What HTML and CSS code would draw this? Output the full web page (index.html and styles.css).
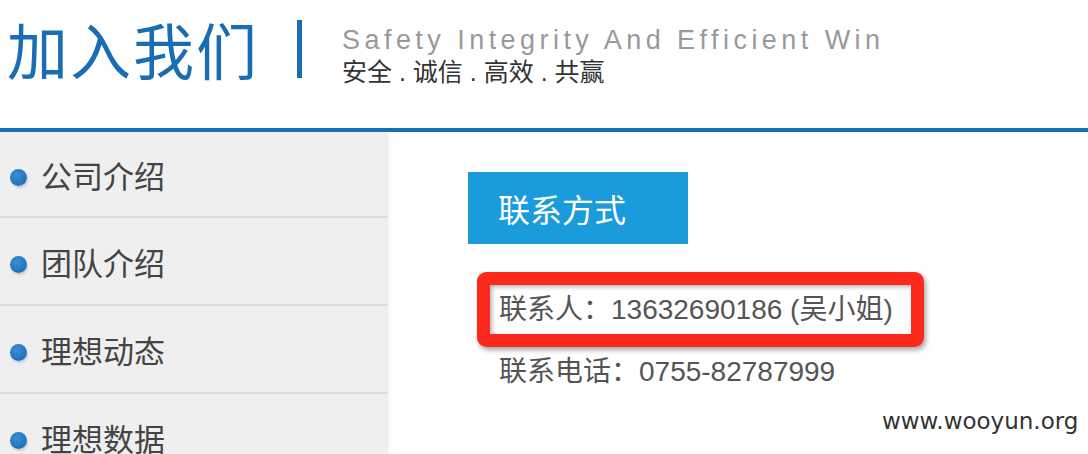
FILE: index.html
```html
<!DOCTYPE html>
<html lang="zh-CN">
<head>
<meta charset="utf-8">
<title>加入我们</title>
<link rel="stylesheet" href="styles.css">
</head>
<body>
<header class="header">
  <h1 class="title">加入我们</h1>
  <span class="divider"></span>
  <div class="slogan">
    <div class="slogan-en">Safety Integrity And Efficient Win</div>
    <div class="slogan-cn">安全 . 诚信 . 高效 . 共赢</div>
  </div>
</header>
<main class="main">
  <nav class="sidebar">
    <a class="nav-item first"><span class="dot"></span>公司介绍</a>
    <a class="nav-item"><span class="dot"></span>团队介绍</a>
    <a class="nav-item"><span class="dot"></span>理想动态</a>
    <a class="nav-item"><span class="dot"></span>理想数据</a>
  </nav>
  <section class="content">
    <div class="tab">联系方式</div>
    <div class="highlight"><p class="line">联系人：13632690186 (吴小姐)</p></div>
    <p class="line line-plain">联系电话：0755-82787999</p>
  </section>
</main>
<div class="watermark">www.wooyun.org</div>
</body>
</html>
```
FILE: styles.css
```css
* { box-sizing: border-box; margin: 0; padding: 0; }
html, body { width: 1088px; height: 454px; overflow: hidden; background: #fff; }
body {
  font-family: "Liberation Sans", "Noto Sans CJK SC", sans-serif;
  position: relative;
}
.header {
  height: 132px;
  display: flex;
  align-items: flex-start;
  border-bottom: 4px solid #1a6db3;
}
.title {
  font-family: "Noto Sans CJK SC", sans-serif;
  font-weight: 400;
  font-size: 61px;
  line-height: 61px;
  letter-spacing: 2px;
  color: #1a6db3;
  margin: 18px 0 0 7px;
}
.divider {
  width: 5px;
  height: 58px;
  background: #1a6db3;
  margin: 20px 0 0 38px;
}
.slogan { margin: 24px 0 0 40px; }
.slogan-en {
  font-family: "Liberation Sans", sans-serif;
  font-size: 27px;
  line-height: 32px;
  letter-spacing: 4.45px;
  color: #999;
}
.slogan-cn {
  font-family: "Liberation Sans", "Noto Sans CJK SC", sans-serif;
  font-size: 25px;
  line-height: 32px;
  color: #333;
}
.main { display: flex; height: 322px; overflow: hidden; }
.sidebar {
  width: 388px;
  background: #efefef;
  display: flex;
  flex-direction: column;
  box-shadow: 2px 0 4px rgba(0,0,0,0.04);
}
.nav-item {
  height: 88px;
  flex: none;
  display: flex;
  align-items: center;
  border-bottom: 2px solid #dadada;
  font-family: "Noto Sans CJK SC", sans-serif;
  font-size: 31px;
  color: #444;
  padding-left: 10px;
}
.nav-item.first { height: 86px; }
.dot {
  width: 17px;
  height: 17px;
  border-radius: 50%;
  background: radial-gradient(circle at 40% 35%, #3a8fd6, #1565b0);
  box-shadow: 1px 2px 2px rgba(0,0,0,0.15);
  margin-right: 14px;
  margin-top: 6px;
}
.content { flex: 1; padding: 40px 0 0 80px; }
.tab {
  width: 220px;
  height: 72px;
  background: #1a9bdc;
  color: #fff;
  font-family: "Noto Sans CJK SC", sans-serif;
  font-size: 32px;
  line-height: 72px;
  padding-left: 30px;
}
.highlight {
  display: inline-block;
  margin: 28px 0 0 9px;
  border: 13px solid #fb2a1c;
  border-radius: 9px;
  box-shadow: 2px 3px 5px rgba(0,0,0,0.35), inset 2px 2px 4px rgba(0,0,0,0.3);
  padding: 0 18px 0 9px;
  height: 75px;
}
.line {
  font-family: "Liberation Sans", "Noto Sans CJK SC", sans-serif;
  font-size: 28px;
  line-height: 49px;
  color: #555;
}
.line-plain { padding-left: 31px; margin-top: 0; }
.watermark {
  position: absolute;
  left: 882px;
  top: 408px;
  font-family: "DejaVu Sans", sans-serif;
  font-size: 23px;
  color: #333;
}
```
